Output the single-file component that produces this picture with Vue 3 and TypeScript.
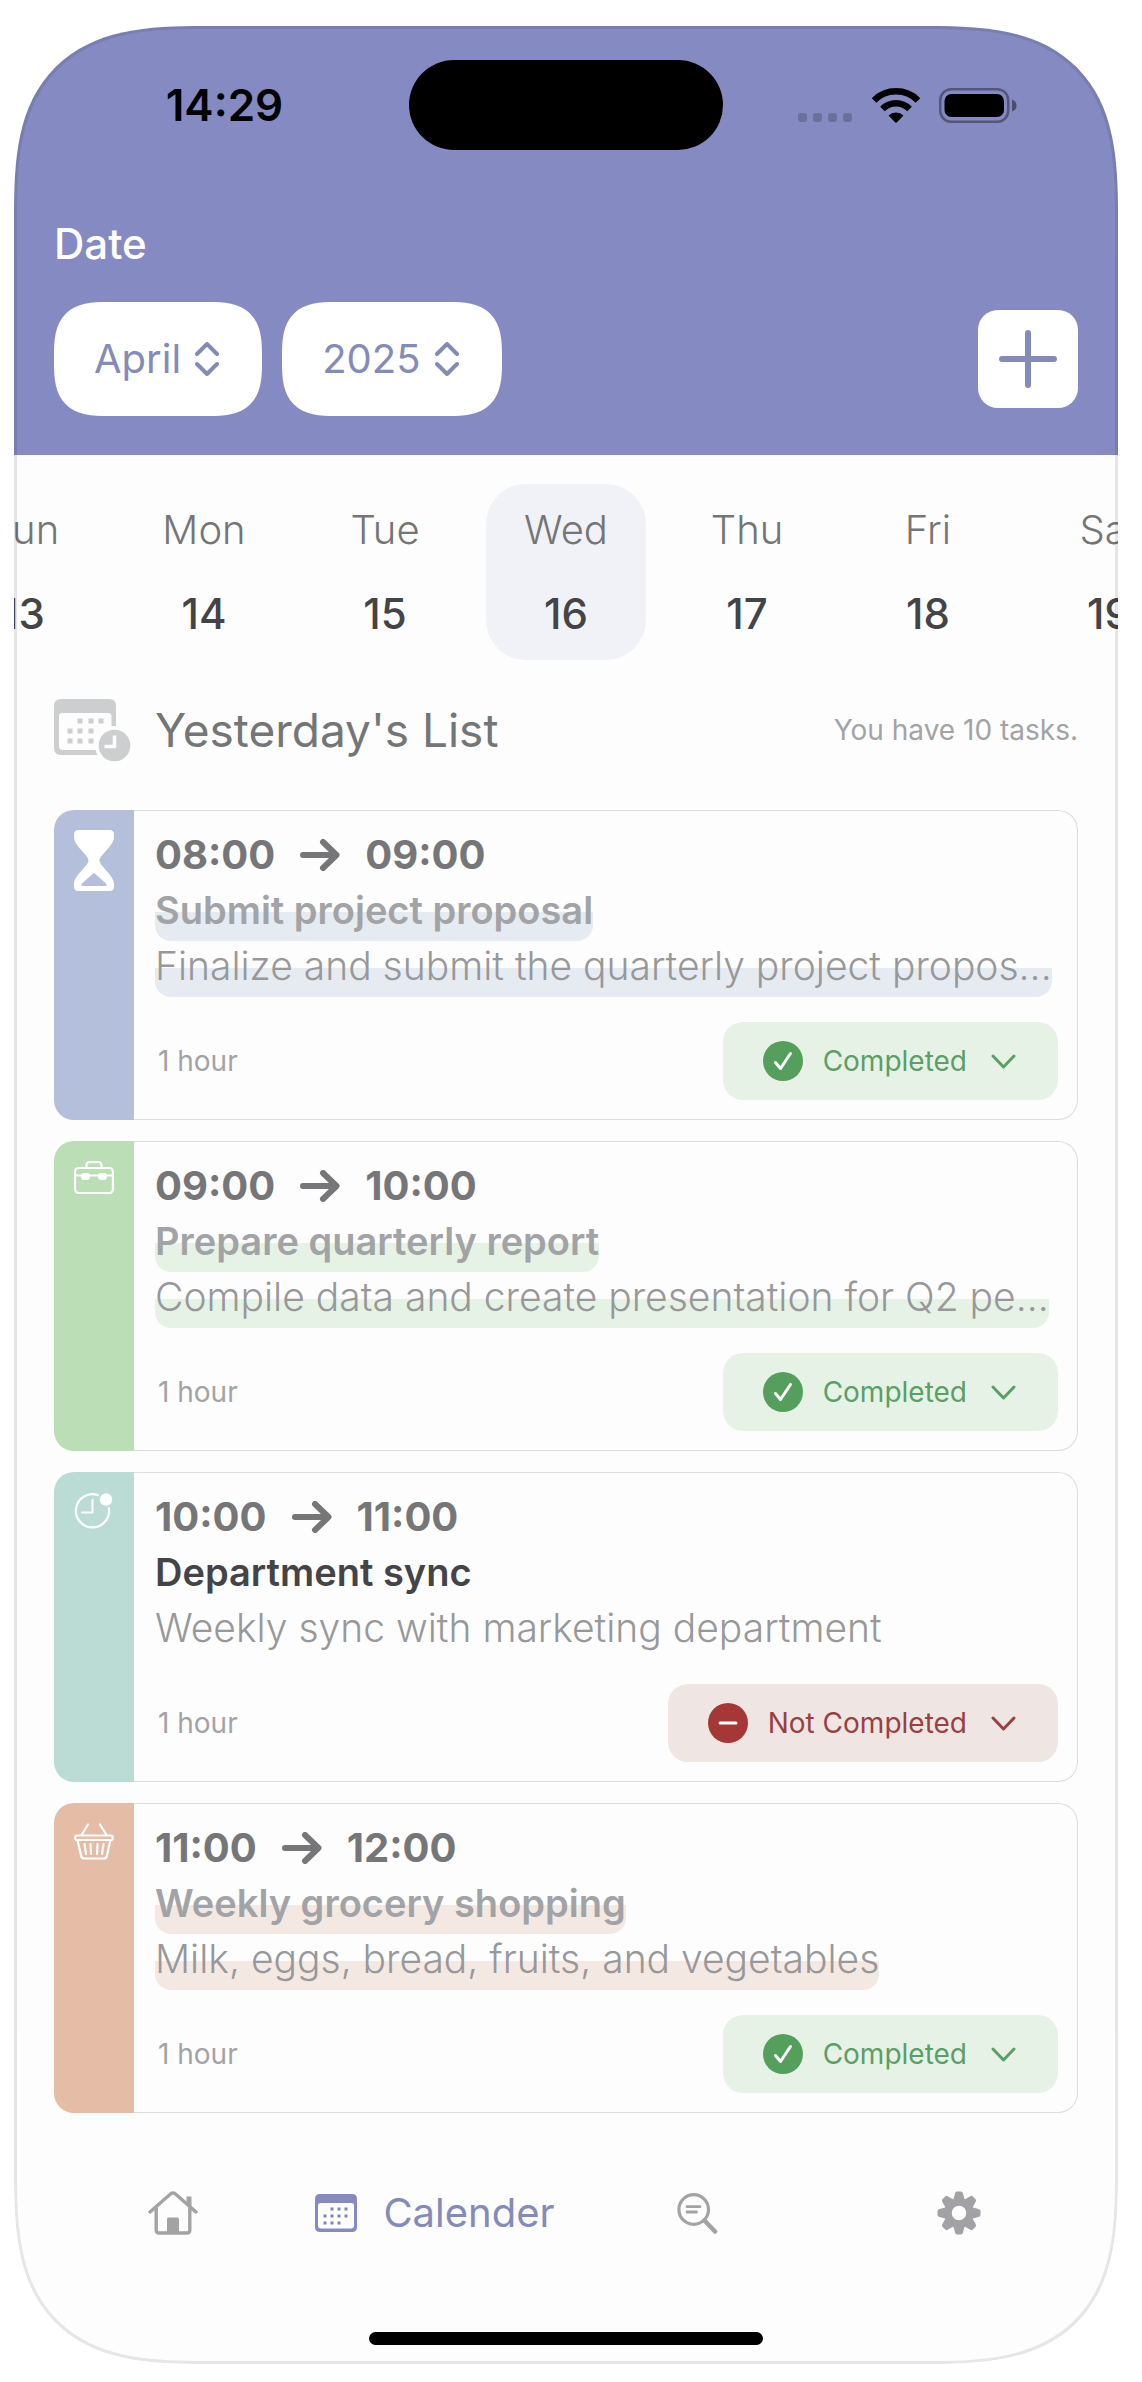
<script setup lang="ts">
import { ref } from 'vue'

type Status = 'Completed' | 'Not Completed'
type Kind = 'hourglass' | 'briefcase' | 'meeting' | 'basket'

interface Task {
  id: number
  start: string
  end: string
  title: string
  note: string
  duration: string
  kind: Kind
  status: Status
}

const months = ['January', 'February', 'March', 'April', 'May', 'June', 'July', 'August', 'September', 'October', 'November', 'December']
const years = ['2024', '2025', '2026']
const month = ref('April')
const year = ref('2025')

const days = [
  { name: 'Sun', date: 13 },
  { name: 'Mon', date: 14 },
  { name: 'Tue', date: 15 },
  { name: 'Wed', date: 16 },
  { name: 'Thu', date: 17 },
  { name: 'Fri', date: 18 },
  { name: 'Sat', date: 19 },
]
const selected = ref(16)

const tasks = ref<Task[]>([
  { id: 1, start: '08:00', end: '09:00', title: 'Submit project proposal', note: 'Finalize and submit the quarterly project propos...', duration: '1 hour', kind: 'hourglass', status: 'Completed' },
  { id: 2, start: '09:00', end: '10:00', title: 'Prepare quarterly report', note: 'Compile data and create presentation for Q2 pe...', duration: '1 hour', kind: 'briefcase', status: 'Completed' },
  { id: 3, start: '10:00', end: '11:00', title: 'Department sync', note: 'Weekly sync with marketing department', duration: '1 hour', kind: 'meeting', status: 'Not Completed' },
  { id: 4, start: '11:00', end: '12:00', title: 'Weekly grocery shopping', note: 'Milk, eggs, bread, fruits, and vegetables', duration: '1 hour', kind: 'basket', status: 'Completed' },
])

const bigDots = [[26, 22], [37, 22], [47, 22], [16, 32], [26, 32], [37, 32], [16, 42], [26, 42], [37, 42]]
const smallDots = [[17, 15], [24, 15], [31, 15], [10, 22], [17, 22], [24, 22], [31, 22], [10, 29], [17, 29], [24, 29]]
const teeth = [0, 45, 90, 135, 180, 225, 270, 315]
</script>

<template>
  <main class="phone">
    <header class="top">
      <div class="status-bar">
        <time class="now">14:29</time>
        <div class="island"></div>
        <div class="signals">
          <svg width="55" height="35" viewBox="0 0 55 35" aria-hidden="true">
            <rect v-for="i in 4" :key="i" :x="(i - 1) * 15" y="25" width="9" height="9" rx="3" fill="#000" opacity=".2" />
          </svg>
          <svg class="wifi" width="48" height="35" viewBox="0 0 48 35" aria-hidden="true">
            <path d="M2 12.500A31 31 0 0 1 46 12.500M10.500 21A19 19 0 0 1 37.500 21" fill="none" stroke="#000" stroke-width="6.500" />
            <path d="M16.500 27.500A11 11 0 0 1 31.500 27.500L25 34.300Q24 35.200 23 34.300Z" />
          </svg>
          <svg width="78" height="35" viewBox="0 0 78 35" aria-hidden="true">
            <rect x="1.250" y="1.250" width="68" height="32.500" rx="11" fill="none" stroke="#000" stroke-opacity=".38" stroke-width="2.500" />
            <rect x="5.500" y="6" width="59.500" height="23" rx="7" />
            <path d="M73 11.500Q77.500 13 77.500 17.500T73 23.500Z" opacity=".45" />
          </svg>
        </div>
      </div>
      <h1 class="label">Date</h1>
      <div class="pickers">
        <label class="picker">
          <select v-model="month" aria-label="Month">
            <option v-for="m in months" :key="m">{{ m }}</option>
          </select>
          <svg width="24" height="34" viewBox="0 0 24 34" aria-hidden="true">
            <path d="M2 12L12 2L22 12M2 22L12 32L22 22" />
          </svg>
        </label>
        <label class="picker">
          <select v-model="year" aria-label="Year">
            <option v-for="y in years" :key="y">{{ y }}</option>
          </select>
          <svg width="24" height="34" viewBox="0 0 24 34" aria-hidden="true">
            <path d="M2 12L12 2L22 12M2 22L12 32L22 22" />
          </svg>
        </label>
        <button class="add" type="button" aria-label="Add task">
          <svg width="58" height="58" viewBox="0 0 58 58" aria-hidden="true">
            <path d="M29 3V55M3 29H55" />
          </svg>
        </button>
      </div>
    </header>

    <nav class="days" aria-label="Days">
      <button v-for="d in days" :key="d.date" type="button" class="day" :class="{ active: d.date === selected }" @click="selected = d.date">
        <span class="day-name">{{ d.name }}</span>
        <span class="day-date">{{ d.date }}</span>
      </button>
    </nav>

    <section class="content">
      <div class="heading">
        <svg width="77" height="63" viewBox="0 0 77 63" aria-hidden="true">
          <path fill="#cdced0" fill-rule="evenodd" d="M7 0H55Q62 0 62 7V49Q62 56 55 56H7Q0 56 0 49V7Q0 0 7 0ZM8 14Q5 14 5 17V47Q5 51 9 51H53Q57.500 51 57.500 47V17Q57.500 14 54 14Z" />
          <rect v-for="(p, i) in bigDots" :key="i" :x="p[0] - 2.5" :y="p[1] - 2.5" width="5" height="5" fill="#cdced0" />
          <circle cx="60.500" cy="46.500" r="19.500" fill="#fdfdfd" />
          <circle cx="60.500" cy="46.500" r="15.800" fill="#cdced0" />
          <path d="M60.500 36.500V47.500H50.500" fill="none" stroke="#fdfdfd" stroke-width="3.500" />
        </svg>
        <h2>Yesterday's List</h2>
        <p>You have 10 tasks.</p>
      </div>

      <ul class="tasks">
        <li v-for="t in tasks" :key="t.id" class="task" :class="[t.kind, { done: t.status === 'Completed' }]">
          <div class="stripe">
            <svg v-if="t.kind === 'hourglass'" width="40" height="61" viewBox="0 0 40 61" aria-hidden="true">
              <path fill="#fff" fill-rule="evenodd" d="M4.500 0H35.500Q40 0 40 4.500V7C40 16 25.500 25 25.500 30.500C25.500 36 40 45 40 54V56.500Q40 61 35.500 61H4.500Q0 61 0 56.500V54C0 45 14.500 36 14.500 30.500C14.500 25 0 16 0 7V4.500Q0 0 4.500 0ZM18.500 44L8 53.500Q6.500 56 9 56H31Q33.500 56 32 53.500L21.500 44Q20 42.500 18.500 44Z" />
            </svg>
            <svg v-else-if="t.kind === 'briefcase'" width="40" height="33" viewBox="0 0 40 33" aria-hidden="true">
              <g fill="none" stroke="#fff" stroke-width="2.200">
                <rect x="1.100" y="7" width="37.800" height="25" rx="3.500" />
                <path d="M12.500 7V4Q12.500 1.100 15.500 1.100H24.500Q27.500 1.100 27.500 4V7M1 14.500H39" />
              </g>
              <rect x="7" y="12" width="9" height="7" rx="3" fill="#fff" />
              <rect x="24" y="12" width="9" height="7" rx="3" fill="#fff" />
            </svg>
            <svg v-else-if="t.kind === 'meeting'" width="40" height="37" viewBox="0 0 40 37" aria-hidden="true">
              <path d="M24 3.200A16.600 16.600 0 1 0 34.800 16M18.500 8V20.500H8" fill="none" stroke="#fff" stroke-width="2.200" stroke-linecap="round" stroke-linejoin="round" />
              <circle cx="32" cy="7.500" r="6.200" fill="#fff" />
            </svg>
            <svg v-else width="40" height="37" viewBox="0 0 40 37" aria-hidden="true">
              <g fill="none" stroke="#fff" stroke-width="2.200" stroke-linecap="round" stroke-linejoin="round">
                <path d="M14 1.500L7.500 12M26 1.500L32.500 12" />
                <rect x="1.200" y="12.500" width="37.600" height="4.500" rx="2" />
                <path d="M3.500 17L7 32.500Q7.500 35.500 10.500 35.500H29.500Q32.500 35.500 33 32.500L36.500 17" />
                <path d="M10.500 21L12 31M16.500 21L17 31M23.500 21L23 31M29.500 21L28 31" />
              </g>
            </svg>
          </div>
          <div class="body">
            <p class="time">
              <time>{{ t.start }}</time>
              <svg width="40" height="32" viewBox="0 0 40 32" aria-hidden="true">
                <path d="M3 16H36M23 3L36.500 16L23 29" />
              </svg>
              <time>{{ t.end }}</time>
            </p>
            <h3 class="title"><span class="mark">{{ t.title }}</span></h3>
            <p class="note"><span class="mark">{{ t.note }}</span></p>
            <div class="foot">
              <span class="duration">{{ t.duration }}</span>
              <label class="state">
                <svg width="40" height="40" viewBox="0 0 40 40" aria-hidden="true">
                  <circle cx="20" cy="20" r="20" fill="var(--badge)" />
                  <path v-if="t.status === 'Completed'" d="M12.500 21.500L17.500 27.500L27.500 12.500" />
                  <path v-else d="M12 20H28" />
                </svg>
                <select v-model="t.status" :aria-label="'Status of ' + t.title">
                  <option>Completed</option>
                  <option>Not Completed</option>
                </select>
                <svg class="chevron" width="25" height="15" viewBox="0 0 25 15" aria-hidden="true">
                  <path d="M2 2L12.500 13L23 2" />
                </svg>
              </label>
            </div>
          </div>
        </li>
      </ul>
    </section>

    <nav class="tabs" aria-label="Main">
      <a href="#home" aria-label="Home">
        <svg width="50" height="44" viewBox="0 0 50 44" aria-hidden="true">
          <g fill="none" stroke="#a3a3a3" stroke-width="3.400" stroke-linecap="round" stroke-linejoin="round">
            <path d="M2 21L22.500 3Q25 1 27.500 3L48 21M8.200 17V39Q8.200 42 11.200 42H38.800Q41.800 42 41.800 39V17" />
          </g>
          <path d="M38.500 5.500H43.500V17L38.500 13ZM19 28Q19 26.500 20.500 26.500H29.500Q31 26.500 31 28V42H19Z" fill="#a3a3a3" />
        </svg>
      </a>
      <a href="#calender" class="current" aria-current="page">
        <svg width="42" height="38" viewBox="0 0 42 38" aria-hidden="true">
          <path fill="#858bc2" fill-rule="evenodd" d="M5 0H37Q42 0 42 5V33Q42 38 37 38H5Q0 38 0 33V5Q0 0 5 0ZM5.500 9Q3 9 3 11.500V31.500Q3 34.500 6 34.500H36Q39 34.500 39 31.500V11.500Q39 9 36.500 9Z" />
          <rect v-for="(p, i) in smallDots" :key="i" :x="p[0] - 1.5" :y="p[1] - 1.5" width="3" height="3" fill="#7f85b8" />
        </svg>
        <span>Calender</span>
      </a>
      <a href="#search" aria-label="Search">
        <svg width="41" height="41" viewBox="0 0 41 41" aria-hidden="true">
          <g fill="none" stroke="#a3a3a3" stroke-width="3.200" stroke-linecap="round">
            <circle cx="16.700" cy="16.500" r="14.800" />
            <path d="M10 13.700H23M10 19H19.500" stroke-width="2.800" />
            <path d="M28 28L38 38.500" stroke-width="4.500" />
          </g>
        </svg>
      </a>
      <a href="#settings" aria-label="Settings">
        <svg width="44" height="44" viewBox="-22 -22 44 44" aria-hidden="true">
          <path v-for="a in teeth" :key="a" :transform="'rotate(' + a + ')'" d="M-6 -12L-4 -19.500Q-3.500 -21.500 -2 -21.500H2Q3.500 -21.500 4 -19.500L6 -12Z" fill="#a2a2a6" />
          <circle r="11" fill="none" stroke="#a2a2a6" stroke-width="7.500" />
        </svg>
      </a>
    </nav>
    <div class="home-indicator"></div>
  </main>
</template>

<style>
body {
  margin: 0;
  background: #fff;
}
</style>

<style scoped>
.phone {
  position: relative;
  margin: 26px 24px 18px 14px;
  padding-bottom: 19px;
  overflow: hidden;
  border-radius: 140px;
  background: #fdfdfd;
  font-family: Inter, "Liberation Sans", sans-serif;
  font-size: 40px;
  line-height: 48px;
}
.phone::after {
  content: "";
  position: absolute;
  inset: 0;
  border: 3px solid rgba(0, 0, 0, 0.09);
  border-radius: inherit;
  pointer-events: none;
}
/* Continuous corners where the browser can draw them */
@supports (corner-shape: superellipse(1.5)) {
  .phone {
    border-radius: 190px;
    corner-shape: superellipse(1.5);
  }
  .phone::after {
    corner-shape: superellipse(1.5);
  }
}
svg {
  display: block;
  flex: none;
}
h1, h2, h3, p, ul {
  margin: 0;
  padding: 0;
  font-weight: inherit;
  font-size: inherit;
}
button, select {
  font: inherit;
  color: inherit;
  border: 0;
  margin: 0;
  padding: 0;
  background: none;
}
select {
  appearance: none;
  field-sizing: content;
  outline: none;
}
.top {
  padding: 34px 0 39px;
  background: #858bc2;
}
.status-bar {
  display: grid;
  grid-template-columns: 1fr 314px 1fr;
  align-items: center;
  justify-items: center;
  padding: 0 26px;
}
.now {
  font-size: 44px;
  font-weight: 600;
}
.island {
  width: 100%;
  height: 90px;
  border-radius: 45px;
  background: #000;
}
.signals {
  display: flex;
  align-items: center;
}
.wifi {
  margin: 0 19px;
}
.label {
  margin: 70px 40px 34px;
  font-size: 42px;
  font-weight: 500;
  color: #fff;
}
.pickers {
  display: flex;
  align-items: center;
  gap: 20px;
  padding: 0 40px;
}
.picker {
  display: flex;
  align-items: center;
  gap: 14px;
  height: 114px;
  padding: 0 43px 0 40px;
  border-radius: 42px;
  background: #fff;
  color: #858bb8;
}
@supports (corner-shape: superellipse(1.5)) {
  .picker {
    border-radius: 54px;
    corner-shape: superellipse(1.5);
  }
}
.picker path, .add path {
  fill: none;
  stroke: #858bb8;
  stroke-width: 4;
  stroke-linecap: round;
  stroke-linejoin: round;
}
.add {
  display: grid;
  place-items: center;
  width: 100px;
  height: 98px;
  margin-left: auto;
  border-radius: 20px;
  background: #fff;
}
.add path {
  stroke-width: 6;
}
.days {
  display: flex;
  justify-content: center;
  gap: 21px;
  padding: 29px 0 38px;
}
.day {
  display: flex;
  flex: none;
  flex-direction: column;
  align-items: center;
  gap: 36px;
  width: 160px;
  padding: 22px 0;
  border-radius: 40px;
}
.day.active {
  background: #f1f2f7;
}
.day-name {
  font-weight: 300;
  color: #757575;
}
.day-date {
  font-size: 42px;
  font-weight: 500;
  color: #444446;
}
.content {
  padding: 0 40px;
}
.heading {
  display: flex;
  align-items: center;
  gap: 24px;
  height: 64px;
  margin-bottom: 48px;
}
.heading h2 {
  font-size: 46px;
  color: #747577;
  white-space: nowrap;
}
.heading p {
  margin-left: auto;
  font-size: 28px;
  color: #a3a3a5;
  white-space: nowrap;
}
.tasks {
  display: flex;
  flex-direction: column;
  gap: 21px;
  list-style: none;
}
.task {
  display: flex;
  --badge: #a53836;
  --ink: #994040;
  --pill: #efe6e3;
}
.task.done {
  --badge: #559f5d;
  --ink: #5a9f65;
  --pill: #e7f2e7;
}
.stripe {
  flex: none;
  width: 80px;
  padding-top: 20px;
  box-sizing: border-box;
  border-radius: 20px 0 0 20px;
  background: var(--tone);
}
.stripe svg {
  margin: 0 auto;
}
.hourglass { --tone: #b4bfdb; --wash: #e6ebf2; }
.briefcase { --tone: #bbdeb6; --wash: #e6f2e5; }
.meeting { --tone: #bbdcd4; }
.basket { --tone: #e5bda6; --wash: #f4e9e2; }
.body {
  flex: 1;
  min-width: 0;
  padding: 20px 19px 19px 21px;
  border: solid #dcdcde;
  border-width: 1px 1px 1px 0;
  border-radius: 0 20px 20px 0;
}
.time {
  display: flex;
  align-items: center;
  gap: 25px;
  margin-bottom: 6px;
  font-weight: 700;
  color: #767678;
}
.time path {
  fill: none;
  stroke: #767678;
  stroke-width: 6;
  stroke-linecap: round;
  stroke-linejoin: round;
}
.title, .note {
  line-height: 50px;
  white-space: nowrap;
}
.title {
  font-size: 38px;
  font-weight: 600;
  color: #444448;
}
.done .title {
  color: #a2a3a6;
}
.note {
  font-size: 39px;
  font-weight: 300;
  color: #98989a;
}
.mark {
  display: block;
  width: fit-content;
  max-width: 100%;
  padding-bottom: 6px;
  overflow: hidden;
  text-overflow: ellipsis;
}
.done .mark {
  border-radius: 16px;
  background: linear-gradient(var(--wash), var(--wash)) 0 100% / 100% 29px no-repeat;
}
.foot {
  display: flex;
  align-items: center;
  justify-content: space-between;
  margin-top: 25px;
  font-size: 28px;
}
.duration {
  padding-left: 3px;
  color: #a3a3a5;
}
.state {
  display: flex;
  align-items: center;
  gap: 20px;
  height: 78px;
  padding: 0 42px 0 40px;
  border-radius: 20px;
  background: var(--pill);
  color: var(--ink);
}
.state path {
  fill: none;
  stroke: #fff;
  stroke-width: 3;
  stroke-linecap: round;
  stroke-linejoin: round;
}
.state .chevron {
  margin-left: 4px;
}
.state .chevron path {
  stroke: var(--ink);
}
.tabs {
  display: grid;
  grid-template-columns: repeat(4, 1fr);
  align-items: center;
  height: 80px;
  margin-top: 60px;
  padding: 0 28px;
}
.tabs a {
  display: flex;
  align-items: center;
  justify-content: center;
  gap: 26px;
  text-decoration: none;
}
.tabs .current {
  color: #858bb8;
}
.home-indicator {
  width: 394px;
  max-width: 60%;
  height: 13px;
  margin: 79px auto 0;
  border-radius: 7px;
  background: #000;
}
</style>
